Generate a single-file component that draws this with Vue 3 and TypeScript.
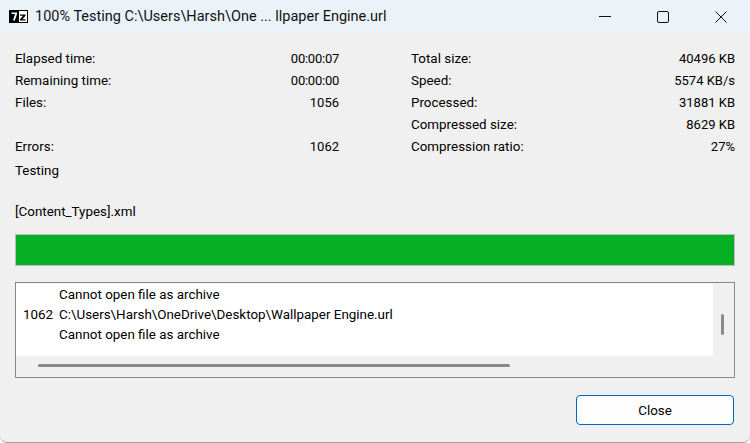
<script setup lang="ts">
const leftStats = [
  { label: 'Elapsed time:', value: '00:00:07', tight: true },
  { label: 'Remaining time:', value: '00:00:00', tight: true },
  { label: 'Files:', value: '1056', tight: false },
  { label: '', value: '', tight: false },
  { label: 'Errors:', value: '1062', tight: false },
]
const rightStats = [
  { label: 'Total size:', value: '40496 KB' },
  { label: 'Speed:', value: '5574 KB/s' },
  { label: 'Processed:', value: '31881 KB' },
  { label: 'Compressed size:', value: '8629 KB' },
  { label: 'Compression ratio:', value: '27%' },
]
</script>

<template>
  <div class="window">
    <header class="titlebar">
      <svg class="app-icon" width="19" height="13" viewBox="0 0 19 13">
        <rect x="0.5" y="0.5" width="18" height="12" fill="#fff" stroke="#000" />
        <rect x="1" y="1" width="9" height="11" fill="#000" />
        <path d="M2.5 2.5h5.5v1.6L5.8 10.5H4L6 4H2.5z" fill="#fff" />
        <path d="M11 4.5h5.5v1.3L13.4 9.3h3.1v1.2H11V9.2l3-3.5h-3z" fill="#000" />
      </svg>
      <span class="title">100% Testing C:\Users\Harsh\One ... llpaper Engine.url</span>
      <div class="controls">
        <svg width="12" height="12" viewBox="0 0 12 12"><path d="M0 5.5h12" stroke="#111" fill="none" /></svg>
        <svg width="12" height="12" viewBox="0 0 12 12"><rect x="0.5" y="0.5" width="11" height="11" rx="1.5" stroke="#111" fill="none" /></svg>
        <svg width="12" height="12" viewBox="0 0 12 12"><path d="M0.5 0.5l11 11M11.5 0.5l-11 11" stroke="#111" fill="none" /></svg>
      </div>
    </header>
    <main class="body">
      <section class="stats">
        <div class="col">
          <div v-for="(s, i) in leftStats" :key="i" class="row">
            <span>{{ s.label }}</span><span class="val" :class="{ tight: s.tight }">{{ s.value }}</span>
          </div>
        </div>
        <div class="col">
          <div v-for="s in rightStats" :key="s.label" class="row">
            <span>{{ s.label }}</span><span class="val">{{ s.value }}</span>
          </div>
        </div>
      </section>
      <div class="status">Testing</div>
      <div class="file">[Content_Types].xml</div>
      <div class="progress"><div class="fill"></div></div>
      <div class="log">
        <div class="log-main">
          <div class="log-list">
            <div class="log-row"><span class="num"></span><span>Cannot open file as archive</span></div>
            <div class="log-row"><span class="num">1062</span><span>C:\Users\Harsh\OneDrive\Desktop\Wallpaper Engine.url</span></div>
            <div class="log-row"><span class="num"></span><span>Cannot open file as archive</span></div>
          </div>
          <div class="vscroll"><div class="vthumb"></div></div>
        </div>
        <div class="hscroll"><div class="hthumb"></div></div>
      </div>
      <div class="footer">
        <button class="close" type="button">Close</button>
      </div>
    </main>
  </div>
</template>

<style scoped>
.window {
  width: 750px;
  height: 443px;
  box-sizing: border-box;
  background: #f0f0f0;
  font-family: Roboto, "Liberation Sans", sans-serif;
  font-size: 13.4px;
  color: #000;
  overflow: hidden;
  display: flex;
  flex-direction: column;
  border-radius: 0 0 7px 7px;
  border-bottom: 1px solid #a0a0a0;
}
.titlebar {
  height: 33px;
  background: #ebf3f9;
  display: flex;
  align-items: center;
  padding-left: 9px;
  flex: none;
}
.app-icon { flex: none; margin-right: 7px; }
.title { font-size: 14.5px; flex: 1; white-space: nowrap; color: #111; }
.controls {
  display: flex;
  gap: 46px;
  padding-right: 23px;
  align-items: center;
}
.body {
  flex: 1;
  padding: 15px 15px 0 15px;
  display: flex;
  flex-direction: column;
}
.stats {
  display: flex;
  gap: 72px;
}
.col { width: 324px; }
.row {
  height: 22px;
  line-height: 22px;
  display: flex;
  justify-content: space-between;
}
.val { font-size: 13px; }
.tight { letter-spacing: -0.25px; }
.status { margin-top: 2px; height: 22px; line-height: 22px; }
.file { margin-top: 19px; height: 22px; line-height: 22px; }
.progress {
  margin-top: 11px;
  height: 32px;
  box-sizing: border-box;
  border: 1px solid #bcbcbc;
  background: #e6e6e6;
}
.fill { height: 100%; background: #06b025; }
.log {
  margin-top: 16px;
  height: 96px;
  box-sizing: border-box;
  border: 1px solid #828790;
  background: #f0f0f0;
  display: flex;
  flex-direction: column;
}
.log-main { display: flex; height: 73px; padding-top: 1px; box-sizing: border-box; }
.log-list {
  flex: 1;
  background: #fff;
  border-radius: 0 0 2px 0;
  padding: 1px 0 0 7px;
}
.log-row { height: 20px; line-height: 20px; display: flex; }
.num { width: 28px; margin-right: 8px; text-align: right; }
.vscroll { width: 21px; position: relative; flex: none; }
.vthumb {
  position: absolute;
  left: 8px;
  top: 30px;
  width: 3px;
  height: 21px;
  border-radius: 2px;
  background: #8a8a8a;
}
.hscroll { flex: 1; position: relative; }
.hthumb {
  position: absolute;
  left: 22px;
  top: 8px;
  width: 472px;
  height: 3px;
  border-radius: 2px;
  background: #8a8a8a;
}
.footer {
  display: flex;
  justify-content: flex-end;
  margin-top: 17px;
  padding-right: 1px;
}
.close {
  width: 158px;
  height: 30px;
  box-sizing: border-box;
  border: 1px solid #0067c0;
  border-radius: 4px;
  background: #fdfdfd;
  font: inherit;
  color: #000;
  padding: 0;
}
</style>

<style>
html, body { margin: 0; background: #fff; }
</style>
